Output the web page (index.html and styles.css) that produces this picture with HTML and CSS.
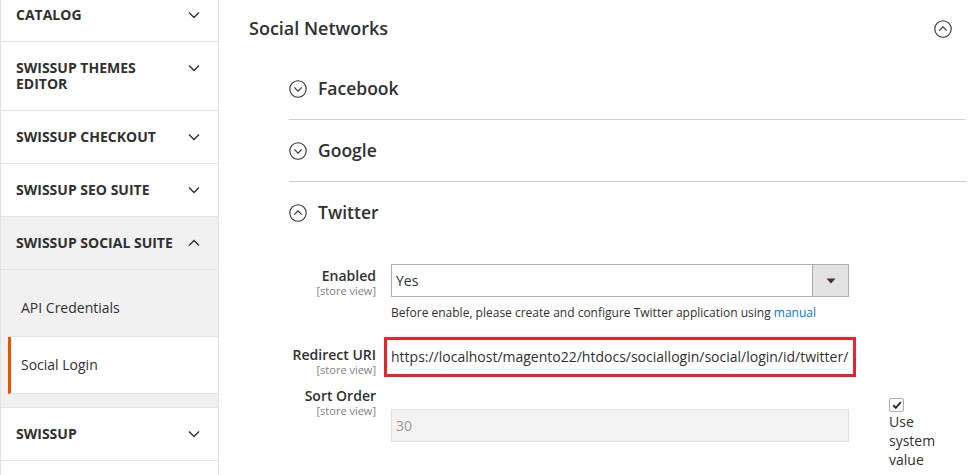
FILE: index.html
```html
<!DOCTYPE html>
<html lang="en">
<head>
<meta charset="utf-8">
<title>Configuration</title>
<link rel="stylesheet" href="styles.css">
</head>
<body>
<div class="page">
  <nav class="sidenav">
    <div class="nav-item">
      <div class="nav-title"><span class="nav-text">Catalog</span><svg class="chev" viewBox="0 0 12 16" width="12" height="16"><path d="M1 5.5 L6 10.5 L11 5.5" /></svg></div>
    </div>
    <div class="nav-item">
      <div class="nav-title"><span class="nav-text">Swissup Themes Editor</span><svg class="chev" viewBox="0 0 12 16" width="12" height="16"><path d="M1 5.5 L6 10.5 L11 5.5" /></svg></div>
    </div>
    <div class="nav-item">
      <div class="nav-title"><span class="nav-text">Swissup Checkout</span><svg class="chev" viewBox="0 0 12 16" width="12" height="16"><path d="M1 5.5 L6 10.5 L11 5.5" /></svg></div>
    </div>
    <div class="nav-item">
      <div class="nav-title"><span class="nav-text">Swissup SEO Suite</span><svg class="chev" viewBox="0 0 12 16" width="12" height="16"><path d="M1 5.5 L6 10.5 L11 5.5" /></svg></div>
    </div>
    <div class="nav-item open">
      <div class="nav-title"><span class="nav-text">Swissup Social Suite</span><svg class="chev" viewBox="0 0 12 16" width="12" height="16"><path d="M1 10.5 L6 5.5 L11 10.5" /></svg></div>
      <ul class="submenu">
        <li class="sub-item">API Credentials</li>
        <li class="sub-item active">Social Login</li>
      </ul>
    </div>
    <div class="nav-item">
      <div class="nav-title"><span class="nav-text">Swissup</span><svg class="chev" viewBox="0 0 12 16" width="12" height="16"><path d="M1 5.5 L6 10.5 L11 5.5" /></svg></div>
    </div>
    <div class="nav-item">
      <div class="nav-title"><span class="nav-text">&nbsp;</span></div>
    </div>
  </nav>

  <main class="content">
    <div class="section-head">
      <h2 class="section-title">Social Networks</h2>
      <svg class="circ" viewBox="0 0 18 18" width="18" height="18"><circle cx="9" cy="9" r="8.2"/><path d="M5.3 10.6 L9 6.9 L12.7 10.6"/></svg>
    </div>

    <div class="groups">
      <div class="group">
        <div class="group-head">
          <svg class="circ" viewBox="0 0 18 18" width="18" height="18"><circle cx="9" cy="9" r="8.2"/><path d="M5.3 7.4 L9 11.1 L12.7 7.4"/></svg>
          <span class="group-title">Facebook</span>
        </div>
      </div>
      <div class="group">
        <div class="group-head">
          <svg class="circ" viewBox="0 0 18 18" width="18" height="18"><circle cx="9" cy="9" r="8.2"/><path d="M5.3 7.4 L9 11.1 L12.7 7.4"/></svg>
          <span class="group-title">Google</span>
        </div>
      </div>
      <div class="group open">
        <div class="group-head">
          <svg class="circ" viewBox="0 0 18 18" width="18" height="18"><circle cx="9" cy="9" r="8.2"/><path d="M5.3 10.6 L9 6.9 L12.7 10.6"/></svg>
          <span class="group-title">Twitter</span>
        </div>

        <div class="fields">
          <div class="field field-enabled">
            <div class="label"><span class="label-text">Enabled</span><span class="scope">[store view]</span></div>
            <div class="control">
              <div class="select"><span class="select-value">Yes</span><span class="select-btn"><svg viewBox="0 0 10 6" width="10" height="6"><path d="M0.5 0.5 H9.5 L5 5.5 Z"/></svg></span></div>
              <p class="note">Before enable, please create and configure Twitter application using <a class="link" href="#">manual</a></p>
            </div>
            <div class="use-default"></div>
          </div>

          <div class="field field-redirect">
            <div class="label"><span class="label-text">Redirect URI</span><span class="scope">[store view]</span></div>
            <div class="control">
              <div class="value highlighted">https://localhost/magento22/htdocs/sociallogin/social/login/id/twitter/</div>
            </div>
            <div class="use-default"></div>
          </div>

          <div class="field field-sort">
            <div class="label"><span class="label-text">Sort Order</span><span class="scope">[store view]</span></div>
            <div class="control control-sort">
              <div class="input disabled">30</div>
            </div>
            <div class="use-default use-default-sort">
              <span class="checkbox"><svg viewBox="0 0 14 14" width="14" height="14"><path d="M3.2 7.2 L5.8 9.8 L10.8 4.2"/></svg></span>
              <span class="use-label">Use system value</span>
            </div>
          </div>
        </div>
      </div>
    </div>
  </main>
</div>
</body>
</html>
```

FILE: styles.css
```css
* { box-sizing: border-box; }

html, body {
  margin: 0;
  padding: 0;
  background: #ffffff;
}

body {
  font-family: "Open Sans", "Liberation Sans", sans-serif;
  color: #303030;
  overflow: hidden;
  height: 475px;
}

.page {
  display: flex;
  align-items: flex-start;
}

/* ---------- Sidebar ---------- */
.sidenav {
  width: 219px;
  flex: 0 0 219px;
  margin-top: -11px;
  border-left: 1px solid #e3e3e3;
  border-right: 1px solid #e3e3e3;
}

.nav-item {
  border-bottom: 1px solid #e3e3e3;
}

.nav-title {
  display: flex;
  align-items: flex-start;
  gap: 8px;
  padding: 18px 18px 18px 15px;
  font-size: 14px;
  line-height: 16px;
  font-weight: 700;
  text-transform: uppercase;
  color: #303030;
}

.nav-text {
  flex: 1;
  min-width: 0;
}

.chev {
  flex: 0 0 12px;
  fill: none;
  stroke: #303030;
  stroke-width: 1.4;
}

.nav-item.open .nav-title {
  background: #f1f1f1;
  border-bottom: 1px solid #e3e3e3;
}

.submenu {
  list-style: none;
  margin: 0;
  padding: 10px 0 13px 0;
  background: #f1f1f1;
}

.sub-item {
  margin-left: 7px;
  padding: 18px 10px 18px 10px;
  border-left: 3px solid transparent;
  border-bottom: 1px solid #e3e3e3;
  font-size: 14px;
  line-height: 20px;
  color: #303030;
}

.sub-item.active {
  background: #ffffff;
  border-left-color: #eb5202;
}

/* ---------- Content ---------- */
.content {
  flex: 1;
  padding: 17px 14px 0 30px;
}

.section-head {
  display: flex;
  align-items: center;
  justify-content: space-between;
  padding-right: 14px;
}

.section-title {
  margin: 0;
  font-size: 18px;
  line-height: 23px;
  font-weight: 600;
  color: #303030;
}

.circ {
  flex: 0 0 18px;
  fill: none;
  stroke: #303030;
  stroke-width: 1.1;
}

.groups {
  margin-top: 18px;
  margin-left: 40px;
}

.group-head {
  display: flex;
  align-items: center;
  gap: 11px;
  padding: 19px 0;
  border-bottom: 1px solid #d1d1d1;
}

.group.open .group-head {
  border-bottom: none;
}

.group-title {
  font-size: 17.5px;
  line-height: 23px;
  font-weight: 600;
  color: #303030;
}

/* ---------- Fields ---------- */
.fields {
  padding-top: 21px;
}

.field {
  display: grid;
  grid-template-columns: 87px 458px 1fr;
  column-gap: 15px;
  align-items: start;
}

.label {
  display: flex;
  flex-direction: column;
  align-items: flex-end;
  text-align: right;
  padding-top: 4px;
}

.label-text {
  font-size: 14px;
  line-height: 16px;
  font-weight: 600;
  color: #303030;
}

.scope {
  font-size: 11px;
  line-height: 12px;
  margin-top: 1px;
  color: #808080;
}

.select {
  display: flex;
  height: 33px;
  border: 1px solid #adadad;
  background: #ffffff;
}

.select-value {
  flex: 1;
  padding-left: 4px;
  font-size: 14px;
  line-height: 31px;
  color: #303030;
}

.select-btn {
  width: 36px;
  flex: 0 0 36px;
  background: #e3e3e3;
  border-left: 1px solid #adadad;
  display: flex;
  align-items: center;
  justify-content: center;
}

.select-btn svg {
  fill: #41362f;
}

.note {
  margin: 8px 0 0 0;
  font-size: 12px;
  line-height: 16px;
  color: #303030;
}

.link {
  color: #007bdb;
  text-decoration: none;
}

.field-redirect {
  margin-top: 23px;
}

.field-redirect .label {
  padding-top: 3px;
}

.value {
  font-size: 14px;
  line-height: 26px;
  color: #303030;
  white-space: nowrap;
}

.highlighted {
  outline: 3px solid #e8242b;
  outline-offset: 4px;
}

.field-sort {
  margin-top: 8px;
}

.control-sort {
  padding-top: 25px;
}

.input {
  height: 33px;
  border: 1px solid #e0e0e0;
  padding-left: 4px;
  font-size: 14px;
  line-height: 31px;
}

.input.disabled {
  background: #f3f3f3;
  color: #999999;
}

.use-default {
  padding-left: 25px;
}

.use-default-sort {
  padding-top: 14px;
  width: 90px;
}

.checkbox {
  display: block;
  width: 15px;
  height: 14px;
  border: 1px solid #adadad;
  border-radius: 2px;
  background: #ffffff;
}

.checkbox svg {
  display: block;
  margin: -1px 0 0 0;
  fill: none;
  stroke: #303030;
  stroke-width: 2;
}

.use-label {
  display: block;
  width: 55px;
  font-size: 14px;
  line-height: 19px;
  color: #303030;
}
```
